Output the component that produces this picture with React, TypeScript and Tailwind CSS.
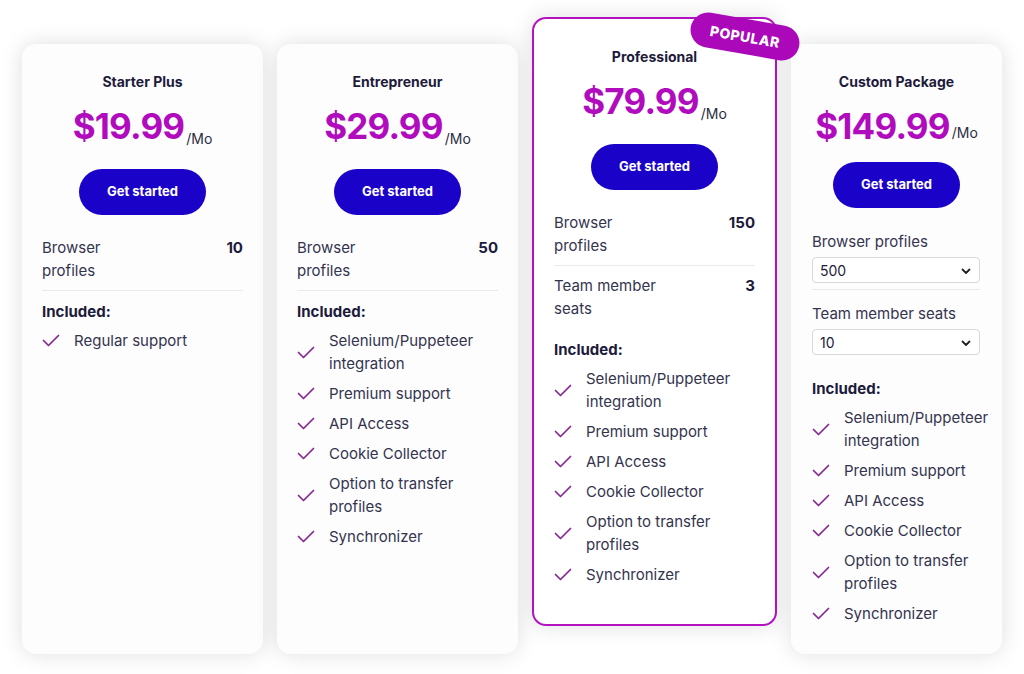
import React from "react";

const Check = () => (
  <svg width="18" height="13" viewBox="0 0 18 13" fill="none" className="shrink-0">
    <path d="M1.5 6.5 L6.5 11.5 L16.5 1.5" stroke="#8b2596" strokeWidth="1.7" strokeLinecap="round" strokeLinejoin="round" />
  </svg>
);

const Chevron = () => (
  <svg width="10" height="7" viewBox="0 0 10 7" fill="none" className="absolute right-[8px] top-[10px]">
    <path d="M1.5 1.5 L5 5 L8.5 1.5" stroke="#222" strokeWidth="1.8" strokeLinecap="round" strokeLinejoin="round" />
  </svg>
);

type Row = { label: string; value: string; border: boolean };

const Items = ({ items }: { items: string[] }) => (
  <div className="flex flex-col gap-[7px] mt-[6px]">
    {items.map((t) => (
      <div key={t} className="flex items-center">
        <div className="w-[32px] shrink-0">
          <Check />
        </div>
        <span className="text-[15px] leading-[23px] text-[#34344e]">{t}</span>
      </div>
    ))}
  </div>
);

const Header = ({ title, price, moClass, btnMt }: { title: string; price: string; moClass: string; btnMt: string }) => (
  <div className="flex flex-col items-center">
    <div className="text-[14px] leading-[20px] font-bold text-[#1d1b3b]">{title}</div>
    <div className="flex items-end mt-[12px] h-[44px]">
      <span className="text-[35px] leading-[44px] font-bold text-[#b00cbd] tracking-[-0.8px]">{price}</span>
      <span className={`text-[14px] leading-[20px] text-[#2c2c44] ml-[2px] ${moClass}`}>/Mo</span>
    </div>
    <button className={`w-[127px] h-[46px] rounded-full bg-[#1b02c9] text-white text-[13px] font-bold ${btnMt}`}>
      Get started
    </button>
  </div>
);

const FixedCard = ({
  title,
  price,
  rows,
  items,
  highlight,
}: {
  title: string;
  price: string;
  rows: Row[];
  items: string[];
  highlight?: boolean;
}) => (
  <div
    className={
      highlight
        ? "relative w-[245px] h-[609px] shrink-0 rounded-[14px] border-2 border-[#b312c3] bg-white px-[20px] pt-[28px] shadow-[0_0_22px_rgba(0,0,0,0.13)]"
        : "relative mt-[27px] w-[241px] h-[610px] shrink-0 rounded-[14px] bg-[#fdfdfe] px-[20px] pt-[28px] shadow-[0_0_22px_rgba(0,0,0,0.13)]"
    }
  >
    {highlight && (
      <div className="absolute left-[156px] top-[0px] w-[110px] h-[35px] rounded-full bg-[#aa08b9] flex items-center justify-center rotate-[10deg] z-10">
        <span className="text-white text-[14px] font-extrabold tracking-[0.5px]">POPULAR</span>
      </div>
    )}
    <Header title={title} price={price} moClass="mb-[-1px]" btnMt="mt-[21px]" />
    <div className="mt-[21px] flex flex-col">
      {rows.map((r) => (
        <div key={r.label} className={`flex justify-between pb-[8px] pt-[0px] ${r.border ? "border-b border-[#eaeaee] mb-[8px]" : ""}`}>
          <span className="w-[110px] text-[15px] leading-[23px] text-[#34344e]">{r.label}</span>
          <span className="text-[15px] leading-[23px] font-bold text-[#1d1b3b]">{r.value}</span>
        </div>
      ))}
    </div>
    <div className={`${rows.length > 1 ? "mt-[10px]" : "mt-[1px]"} text-[15px] leading-[23px] font-bold text-[#1d1b3b]`}>Included:</div>
    <Items items={items} />
  </div>
);

const Select = ({ value }: { value: string }) => (
  <div className="relative w-[168px] h-[26px] rounded-[4px] border border-[#d6d6dc] bg-white flex items-center pl-[7px] text-[14px] text-[#1d1b3b]">
    {value}
    <Chevron />
  </div>
);

const CustomCard = ({ items }: { items: string[] }) => (
  <div className="relative mt-[27px] w-[211px] h-[610px] shrink-0 rounded-[14px] bg-[#fdfdfe] pl-[21px] pr-[16px] pt-[28px] shadow-[0_0_22px_rgba(0,0,0,0.13)]">
    <div className="pr-[5px]">
      <Header title="Custom Package" price="$149.99" moClass="mb-[5px]" btnMt="mt-[14px]" />
    </div>
    <div className="mt-[22px] text-[15px] leading-[23px] text-[#34344e]">Browser profiles</div>
    <div className="mt-[4px]">
      <Select value="500" />
    </div>
    <div className="mt-[6px] w-[168px] border-b border-[#eaeaee]" />
    <div className="mt-[12px] text-[15px] leading-[23px] text-[#34344e]">Team member seats</div>
    <div className="mt-[4px]">
      <Select value="10" />
    </div>
    <div className="mt-[22px] text-[15px] leading-[23px] font-bold text-[#1d1b3b]">Included:</div>
    <Items items={items} />
  </div>
);

const full = [
  "Selenium/Puppeteer integration",
  "Premium support",
  "API Access",
  "Cookie Collector",
  "Option to transfer profiles",
  "Synchronizer",
];

export default function App() {
  return (
    <div
      className="w-[1024px] h-[674px] bg-white overflow-hidden flex items-start gap-[14px] pl-[22px] pt-[17px]"
      style={{ fontFamily: "Inter, 'Open Sans', sans-serif" }}
    >
      <FixedCard
        title="Starter Plus"
        price="$19.99"
        rows={[{ label: "Browser profiles", value: "10", border: true }]}
        items={["Regular support"]}
      />
      <FixedCard
        title="Entrepreneur"
        price="$29.99"
        rows={[{ label: "Browser profiles", value: "50", border: true }]}
        items={full}
      />
      <FixedCard
        title="Professional"
        price="$79.99"
        highlight
        rows={[
          { label: "Browser profiles", value: "150", border: true },
          { label: "Team member seats", value: "3", border: false },
        ]}
        items={full}
      />
      <CustomCard items={full} />
    </div>
  );
}
